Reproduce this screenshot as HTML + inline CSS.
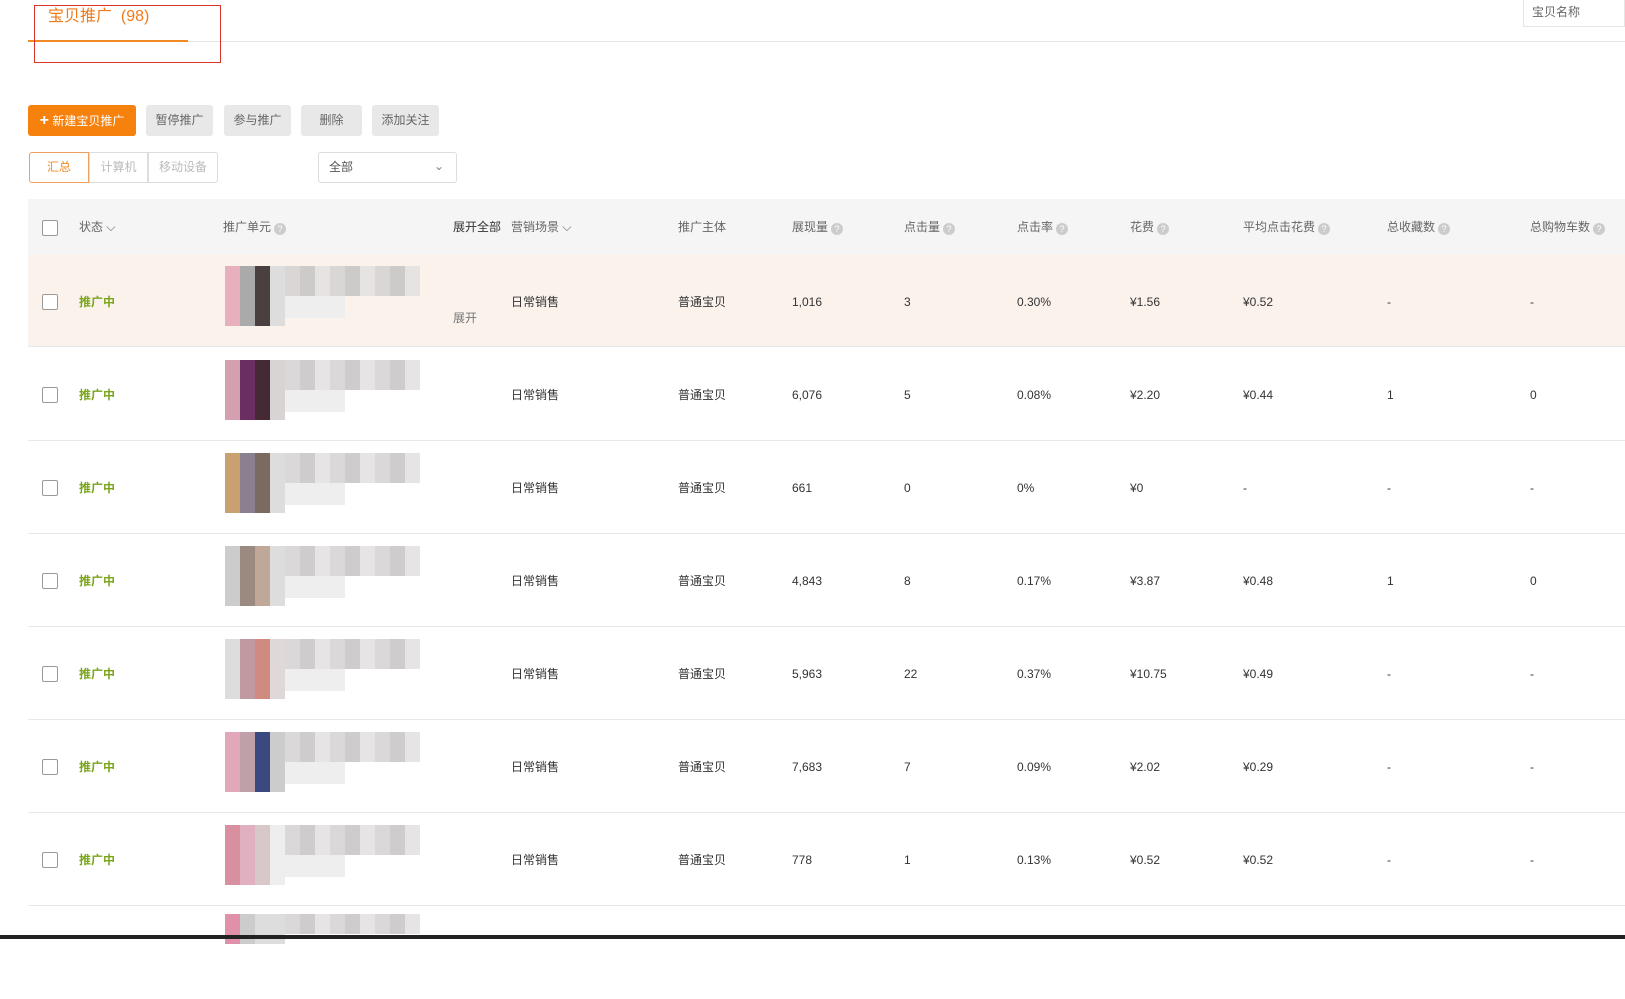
<!DOCTYPE html>
<html><head><meta charset="utf-8"><style>
*{margin:0;padding:0;box-sizing:border-box}
body{width:1625px;height:939px;overflow:hidden;background:#fff;font-family:"Liberation Sans","Noto Sans CJK SC",sans-serif;font-size:12px;color:#333;position:relative}
.a{position:absolute}
.btn{position:absolute;top:105px;height:31px;line-height:31px;text-align:center;background:#e8e8e8;border-radius:3px;color:#666}
.seg{position:absolute;top:152px;height:31px;line-height:29px;text-align:center;border:1px solid #ddd;color:#bbb}
.hd{position:absolute;top:218px;color:#666}
.q{display:inline-block;width:12px;height:12px;border-radius:50%;background:#ccc;color:#fff;font-size:9px;line-height:12px;text-align:center;vertical-align:-1px;margin-left:3px}
.cb{position:absolute;left:42px;width:16px;height:16px;border:1px solid #999;border-radius:2px;background:#fff}
.row{position:absolute;left:28px;right:0;height:93px;border-bottom:1px solid #e8e8e8}
.c{position:absolute;top:0;height:93px;line-height:93px;color:#333}
.st{color:#7aa51c;font-weight:bold}
.img{position:absolute;left:197px;top:12px;width:60px;height:60px}
.img2{position:absolute;left:257px;top:12px;width:135px;height:30px;background:repeating-linear-gradient(90deg,#d6d3d3 0 15px,#c8c6c6 15px 30px,#e3e1e1 30px 45px);opacity:.9}
.img3{position:absolute;left:257px;top:42px;width:60px;height:22px;background:#eee}
</style></head><body>
<div class="a" style="left:48px;top:2px;font-size:16px;color:#f07b1a">宝贝推广 &nbsp;(98)</div>
<div class="a" style="left:28px;top:41px;width:1597px;height:1px;background:#e3e3e3"></div>
<div class="a" style="left:28px;top:40px;width:160px;height:2px;background:#f08a24"></div>
<div class="a" style="left:34px;top:5px;width:187px;height:58px;border:1px solid #d9342b"></div>
<div class="a" style="left:1523px;top:0;width:102px;height:27px;border:1px solid #e5e5e5;border-top:none;color:#666;padding:3px 8px">宝贝名称</div>

<div class="btn" style="left:28px;width:108px;background:#f7810d;color:#fff"><b style="font-size:16px">+</b> 新建宝贝推广</div>
<div class="btn" style="left:146px;width:67px">暂停推广</div>
<div class="btn" style="left:224px;width:67px">参与推广</div>
<div class="btn" style="left:301px;width:61px">删除</div>
<div class="btn" style="left:372px;width:67px">添加关注</div>

<div class="seg" style="left:29px;width:60px;border-color:#f0a060;color:#f08a24;border-radius:3px 0 0 3px">汇总</div>
<div class="seg" style="left:89px;width:59px">计算机</div>
<div class="seg" style="left:148px;width:70px;border-radius:0 3px 3px 0">移动设备</div>
<div class="a" style="left:318px;top:152px;width:139px;height:31px;border:1px solid #ddd;border-radius:3px;line-height:29px;padding-left:10px;color:#555">全部<span style="position:absolute;right:12px;top:-1px;color:#888">&#8964;</span></div>

<div class="a" style="left:28px;top:199px;width:1597px;height:55px;background:#f5f5f5"></div>
<div class="cb" style="top:220px"></div>
<div class="hd" style="left:79px">状态 ⌵</div>
<div class="hd" style="left:223px">推广单元<span class="q">?</span></div>
<div class="hd" style="left:453px;color:#333">展开全部</div>
<div class="hd" style="left:511px">营销场景 ⌵</div>
<div class="hd" style="left:678px">推广主体</div>
<div class="hd" style="left:792px">展现量<span class="q">?</span></div>
<div class="hd" style="left:904px">点击量<span class="q">?</span></div>
<div class="hd" style="left:1017px">点击率<span class="q">?</span></div>
<div class="hd" style="left:1130px">花费<span class="q">?</span></div>
<div class="hd" style="left:1243px">平均点击花费<span class="q">?</span></div>
<div class="hd" style="left:1387px">总收藏数<span class="q">?</span></div>
<div class="hd" style="left:1530px">总购物车数<span class="q">?</span></div>

<div class="row" style="top:254px;background:#fbf2ec"><div class="img" style="background:linear-gradient(90deg,#e8b0bd 0 15px,#aaa 15px 30px,#4a4040 30px 45px,#ddd 45px)"></div><div class="img2"></div><div class="img3"></div><div class="c" style="left:425px;top:18px;color:#777">展开</div></div>
<div class="row" style="top:348px"><div class="img" style="background:linear-gradient(90deg,#d4a0b0 0 15px,#6a2e62 15px 30px,#452a35 30px 45px,#d8d4d4 45px)"></div><div class="img2"></div><div class="img3"></div></div>
<div class="row" style="top:441px"><div class="img" style="background:linear-gradient(90deg,#c9a070 0 15px,#8a8090 15px 30px,#7a6a60 30px 45px,#ddd 45px)"></div><div class="img2"></div><div class="img3"></div></div>
<div class="row" style="top:534px"><div class="img" style="background:linear-gradient(90deg,#ccc 0 15px,#9a8a80 15px 30px,#c0a898 30px 45px,#ddd 45px)"></div><div class="img2"></div><div class="img3"></div></div>
<div class="row" style="top:627px"><div class="img" style="background:linear-gradient(90deg,#ddd 0 15px,#c09aa0 15px 30px,#d08a80 30px 45px,#e0d8d8 45px)"></div><div class="img2"></div><div class="img3"></div></div>
<div class="row" style="top:720px"><div class="img" style="background:linear-gradient(90deg,#e0a8b8 0 15px,#c0a0a8 15px 30px,#3a4a80 30px 45px,#ccc 45px)"></div><div class="img2"></div><div class="img3"></div></div>
<div class="row" style="top:813px"><div class="img" style="background:linear-gradient(90deg,#d890a0 0 15px,#e0b0c0 15px 30px,#d8c8c8 30px 45px,#eee 45px)"></div><div class="img2"></div><div class="img3"></div></div>
<div class="row" style="top:906px;border:none"><div class="img" style="top:8px;height:30px;background:linear-gradient(90deg,#e090a8 0 15px,#ccc 15px 30px,#ddd 30px)"></div><div class="img2" style="top:8px;height:20px"></div></div>
<div class="a" style="left:0;top:935px;width:1625px;height:4px;background:#222"></div>

<div class="cb" style="top:294px"></div><div class="cb" style="top:387px"></div><div class="cb" style="top:480px"></div><div class="cb" style="top:573px"></div><div class="cb" style="top:666px"></div><div class="cb" style="top:759px"></div><div class="cb" style="top:852px"></div>

<div style="position:absolute;left:0;top:256px;width:1625px">
<div style="position:absolute;top:0;height:93px;width:100%;line-height:93px">
<span class="a st" style="left:79px">推广中</span><span class="a" style="left:511px">日常销售</span><span class="a" style="left:678px">普通宝贝</span><span class="a" style="left:792px">1,016</span><span class="a" style="left:904px">3</span><span class="a" style="left:1017px">0.30%</span><span class="a" style="left:1130px">¥1.56</span><span class="a" style="left:1243px">¥0.52</span><span class="a" style="left:1387px">-</span><span class="a" style="left:1530px">-</span></div>
<div style="position:absolute;top:93px;height:93px;width:100%;line-height:93px">
<span class="a st" style="left:79px">推广中</span><span class="a" style="left:511px">日常销售</span><span class="a" style="left:678px">普通宝贝</span><span class="a" style="left:792px">6,076</span><span class="a" style="left:904px">5</span><span class="a" style="left:1017px">0.08%</span><span class="a" style="left:1130px">¥2.20</span><span class="a" style="left:1243px">¥0.44</span><span class="a" style="left:1387px">1</span><span class="a" style="left:1530px">0</span></div>
<div style="position:absolute;top:186px;height:93px;width:100%;line-height:93px">
<span class="a st" style="left:79px">推广中</span><span class="a" style="left:511px">日常销售</span><span class="a" style="left:678px">普通宝贝</span><span class="a" style="left:792px">661</span><span class="a" style="left:904px">0</span><span class="a" style="left:1017px">0%</span><span class="a" style="left:1130px">¥0</span><span class="a" style="left:1243px">-</span><span class="a" style="left:1387px">-</span><span class="a" style="left:1530px">-</span></div>
<div style="position:absolute;top:279px;height:93px;width:100%;line-height:93px">
<span class="a st" style="left:79px">推广中</span><span class="a" style="left:511px">日常销售</span><span class="a" style="left:678px">普通宝贝</span><span class="a" style="left:792px">4,843</span><span class="a" style="left:904px">8</span><span class="a" style="left:1017px">0.17%</span><span class="a" style="left:1130px">¥3.87</span><span class="a" style="left:1243px">¥0.48</span><span class="a" style="left:1387px">1</span><span class="a" style="left:1530px">0</span></div>
<div style="position:absolute;top:372px;height:93px;width:100%;line-height:93px">
<span class="a st" style="left:79px">推广中</span><span class="a" style="left:511px">日常销售</span><span class="a" style="left:678px">普通宝贝</span><span class="a" style="left:792px">5,963</span><span class="a" style="left:904px">22</span><span class="a" style="left:1017px">0.37%</span><span class="a" style="left:1130px">¥10.75</span><span class="a" style="left:1243px">¥0.49</span><span class="a" style="left:1387px">-</span><span class="a" style="left:1530px">-</span></div>
<div style="position:absolute;top:465px;height:93px;width:100%;line-height:93px">
<span class="a st" style="left:79px">推广中</span><span class="a" style="left:511px">日常销售</span><span class="a" style="left:678px">普通宝贝</span><span class="a" style="left:792px">7,683</span><span class="a" style="left:904px">7</span><span class="a" style="left:1017px">0.09%</span><span class="a" style="left:1130px">¥2.02</span><span class="a" style="left:1243px">¥0.29</span><span class="a" style="left:1387px">-</span><span class="a" style="left:1530px">-</span></div>
<div style="position:absolute;top:558px;height:93px;width:100%;line-height:93px">
<span class="a st" style="left:79px">推广中</span><span class="a" style="left:511px">日常销售</span><span class="a" style="left:678px">普通宝贝</span><span class="a" style="left:792px">778</span><span class="a" style="left:904px">1</span><span class="a" style="left:1017px">0.13%</span><span class="a" style="left:1130px">¥0.52</span><span class="a" style="left:1243px">¥0.52</span><span class="a" style="left:1387px">-</span><span class="a" style="left:1530px">-</span></div>
</div>
</body></html>
